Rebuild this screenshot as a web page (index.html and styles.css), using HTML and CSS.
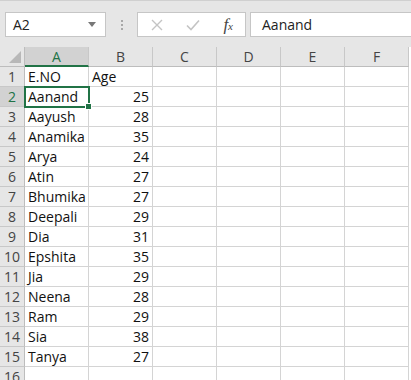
FILE: index.html
```html
<!DOCTYPE html>
<html lang="en">
<head>
  <meta charset="UTF-8">
  <title>Book1 - Excel</title>
  <link rel="stylesheet" href="styles.css">
</head>
<body>

  <div class="toolbar">
    <div class="name-box">
      <span>A2</span>
      <svg class="caret" width="8" height="5" viewBox="0 0 8 5"><path d="M0 0h8L4 5z" fill="#777"/></svg>
    </div>
    <div class="grip"><i></i><i></i><i></i></div>
    <div class="fx-buttons">
      <svg width="12" height="12" viewBox="0 0 12 12"><path d="M1 1l10 10M11 1L1 11" stroke="#c4c4c4" stroke-width="1.4"/></svg>
      <svg width="14" height="12" viewBox="0 0 14 12"><path d="M1 6.5l4 4L13 1.5" stroke="#c4c4c4" stroke-width="1.6" fill="none"/></svg>
      <span class="fx">f<sub>x</sub></span>
    </div>
    <div class="formula">Aanand</div>
  </div>

  <div class="sheet" id="sheet">
    <div class="corner"><svg width="12" height="12" viewBox="0 0 12 12"><path d="M12 0v12H0z" fill="#b8b8b8"/></svg></div>
    <div class="col-head sel">A</div>
    <div class="col-head">B</div>
    <div class="col-head">C</div>
    <div class="col-head">D</div>
    <div class="col-head">E</div>
    <div class="col-head">F</div>
  </div>

  <script>
    const data = [
      ['E.NO', 'Age'],
      ['Aanand', 25], ['Aayush', 28], ['Anamika', 35], ['Arya', 24],
      ['Atin', 27], ['Bhumika', 27], ['Deepali', 29], ['Dia', 31],
      ['Epshita', 35], ['Jia', 29], ['Neena', 28], ['Ram', 29],
      ['Sia', 38], ['Tanya', 27], ['', '']
    ];
    const sheet = document.getElementById('sheet');

    data.forEach(function(row, i) {
      let html = '<div class="row-head' + (i === 1 ? ' sel' : '') + '">' + (i + 1) + '</div>';
      row.forEach(function(v) {
        const num = typeof v === 'number';
        html += '<div class="cell' + (num ? ' num' : '') + '">' + v + '</div>';
      });
      for (let c = 0; c < 4; c++) html += '<div class="cell"></div>';
      sheet.insertAdjacentHTML('beforeend', html);
    });

    sheet.children[7 + 7 + 1].classList.add('active');
  </script>

</body>
</html>
```

FILE: styles.css
```css
body {
  margin: 0;
  font-family: 'Open Sans', 'Noto Sans', sans-serif;
  background: #fff;
  overflow: hidden;
}

.toolbar {
  height: 47px;
  background: #e6e6e6;
  border-top: 1px solid #d0d0d0;
  display: flex;
  align-items: flex-start;
  padding-top: 11px;
  box-sizing: border-box;
}

.name-box {
  margin-left: 5px;
  width: 101px;
  height: 25px;
  background: #fff;
  border: 1px solid #c6c6c6;
  box-sizing: border-box;
  display: flex;
  align-items: center;
  justify-content: space-between;
  padding: 0 9px 0 7px;
  font-size: 14px;
  color: #222;
}

.grip {
  width: 31px;
  height: 25px;
  display: flex;
  flex-direction: column;
  align-items: center;
  justify-content: center;
  gap: 2px;
}

.grip i {
  width: 2px;
  height: 2px;
  background: #a8a8a8;
}

.fx-buttons {
  width: 109px;
  height: 25px;
  background: #fff;
  border: 1px solid #c6c6c6;
  box-sizing: border-box;
  display: flex;
  align-items: center;
  justify-content: space-between;
  padding: 0 12px 0 13px;
}

.fx {
  font-family: 'Liberation Serif', serif;
  font-style: italic;
  font-size: 17px;
  color: #444;
  line-height: 1;
}

.fx sub {
  font-size: 11px;
  vertical-align: 0;
}

.formula {
  margin-left: 4px;
  flex: 1;
  height: 25px;
  background: #fff;
  border: 1px solid #c6c6c6;
  border-right: none;
  box-sizing: border-box;
  font-size: 14px;
  color: #222;
  line-height: 23px;
  padding-left: 11px;
}

.sheet {
  display: grid;
  grid-template-columns: 25px 64px 64px 64px 64px 64px 64px;
  grid-auto-rows: 20px;
  font-size: 14px;
  color: #111;
}

.corner {
  background: #e6e6e6;
  border-right: 1px solid #bdbdbd;
  border-bottom: 1px solid #bdbdbd;
  box-sizing: border-box;
  display: flex;
  align-items: flex-end;
  justify-content: flex-end;
  padding: 0 3px 3px 0;
}

.col-head {
  background: #e6e6e6;
  border-right: 1px solid #c8c8c8;
  border-bottom: 1px solid #bdbdbd;
  box-sizing: border-box;
  text-align: center;
  line-height: 19px;
  color: #444;
}

.col-head.sel {
  background: #d2d2d2;
  color: #217346;
  border-bottom: 2px solid #217346;
}

.row-head {
  background: #e6e6e6;
  border-right: 1px solid #bdbdbd;
  border-bottom: 1px solid #c8c8c8;
  box-sizing: border-box;
  text-align: center;
  line-height: 20px;
  color: #444;
}

.row-head.sel {
  background: #d2d2d2;
  color: #217346;
}

.cell {
  border-right: 1px solid #d4d4d4;
  border-bottom: 1px solid #d4d4d4;
  box-sizing: border-box;
  line-height: 20px;
  padding: 0 3px;
  white-space: nowrap;
  overflow: hidden;
}

.cell.num {
  text-align: right;
}

.cell.active {
  position: relative;
  overflow: visible;
  outline: 2px solid #217346;
  outline-offset: -1px;
}

.cell.active::after {
  content: '';
  position: absolute;
  right: -4px;
  bottom: -4px;
  width: 5px;
  height: 5px;
  background: #217346;
  border: 1px solid #fff;
}
```
